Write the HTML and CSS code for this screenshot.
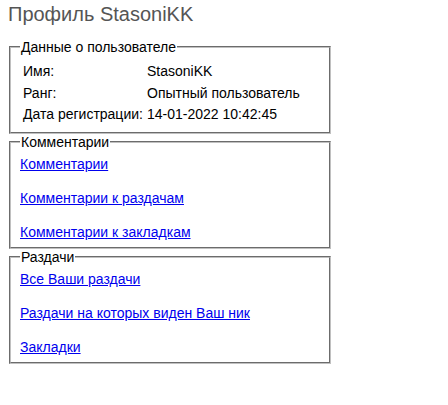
FILE: index.html
```html
<!DOCTYPE html>
<html lang="ru">
<head>
<meta charset="utf-8">
<title>Профиль StasoniKK</title>
<link rel="stylesheet" href="styles.css">
</head>
<body>
<h1 class="title">Профиль StasoniKK</h1>
<fieldset class="box info">
  <legend class="legend">Данные о пользователе</legend>
  <div class="grid">
    <div class="label">Имя:</div><div class="value">StasoniKK</div>
    <div class="label">Ранг:</div><div class="value">Опытный пользователь</div>
    <div class="label">Дата регистрации:</div><div class="value">14-01-2022 10:42:45</div>
  </div>
</fieldset>
<fieldset class="box links">
  <legend class="legend">Комментарии</legend>
  <a class="link" href="#">Комментарии</a>
  <a class="link" href="#">Комментарии к раздачам</a>
  <a class="link" href="#">Комментарии к закладкам</a>
</fieldset>
<fieldset class="box links">
  <legend class="legend">Раздачи</legend>
  <a class="link" href="#">Все Ваши раздачи</a>
  <a class="link" href="#">Раздачи на которых виден Ваш ник</a>
  <a class="link" href="#">Закладки</a>
</fieldset>
</body>
</html>
```
FILE: styles.css
```css
html, body {
  background: #fff;
}
body {
  margin: 0;
  padding: 0 8px;
  font-family: "Liberation Sans", Arial, sans-serif;
  font-size: 14px;
  color: #000;
}
.title {
  margin: 2px 0 0;
  font-size: 20px;
  line-height: 24px;
  font-weight: normal;
  color: #555;
}
.box {
  width: 300px;
  margin: 0 0 0 1px;
  padding: 8px 9px 10px;
  border: 2px groove #c0c0c0;
}
.info {
  margin-top: 13px;
}
.legend {
  padding: 0 1px;
  line-height: 16px;
}
.grid {
  display: grid;
  grid-template-columns: 124px auto;
  row-gap: 5.5px;
  padding-left: 3px;
  line-height: 16px;
}
.links {
  display: flex;
  flex-direction: column;
  align-items: flex-start;
  row-gap: 18px;
  padding-top: 6px;
  padding-bottom: 7px;
}
.link {
  color: #0000ee;
  line-height: 16px;
}
```
